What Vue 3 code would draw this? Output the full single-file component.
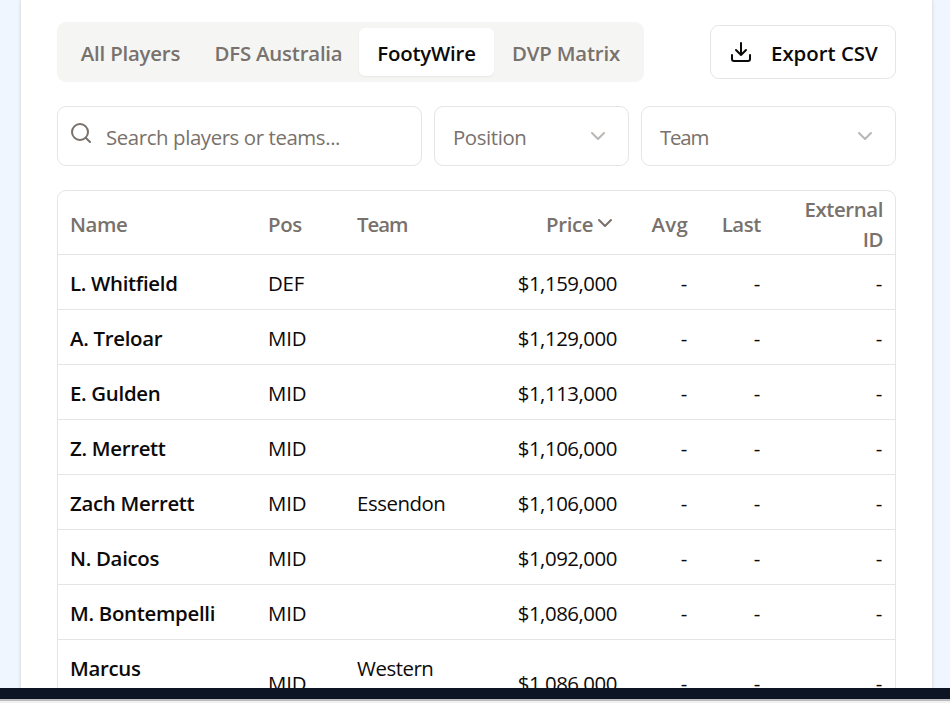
<script setup>
const tabs = ['All Players', 'DFS Australia', 'FootyWire', 'DVP Matrix']
const active = 'FootyWire'
const players = [
  { name: 'L. Whitfield', pos: 'DEF', team: '', price: '$1,159,000' },
  { name: 'A. Treloar', pos: 'MID', team: '', price: '$1,129,000' },
  { name: 'E. Gulden', pos: 'MID', team: '', price: '$1,113,000' },
  { name: 'Z. Merrett', pos: 'MID', team: '', price: '$1,106,000' },
  { name: 'Zach Merrett', pos: 'MID', team: 'Essendon', price: '$1,106,000' },
  { name: 'N. Daicos', pos: 'MID', team: '', price: '$1,092,000' },
  { name: 'M. Bontempelli', pos: 'MID', team: '', price: '$1,086,000' },
  { name: 'Marcus Bontempelli', pos: 'MID', team: 'Western Bulldogs', price: '$1,086,000' },
]
</script>

<template>
  <div class="page">
    <div class="viewport">
      <main class="card">
        <div class="toolbar">
          <div class="tabs">
            <button v-for="t in tabs" :key="t" class="tab" :class="{ active: t === active }"><span>{{ t }}</span></button>
          </div>
          <button class="export">
            <svg width="24" height="24" viewBox="0 0 24 24" class="icon">
              <path d="M21 15v4a2 2 0 0 1-2 2H5a2 2 0 0 1-2-2v-4M7 10l5 5 5-5M12 15V3" />
            </svg>
            <span>Export CSV</span>
          </button>
        </div>

        <div class="filters">
          <div class="field search">
            <svg width="24" height="24" viewBox="0 0 24 24" class="icon">
              <circle cx="11" cy="11" r="8" />
              <path d="m21 21-4.3-4.3" />
            </svg>
            <span>Search players or teams...</span>
          </div>
          <div class="field select position">
            <span>Position</span>
            <svg width="24" height="24" viewBox="0 0 24 24" class="icon"><path d="m6 9 6 6 6-6" /></svg>
          </div>
          <div class="field select team-select">
            <span>Team</span>
            <svg width="24" height="24" viewBox="0 0 24 24" class="icon"><path d="m6 9 6 6 6-6" /></svg>
          </div>
        </div>

        <div class="table-wrap">
          <table>
            <colgroup>
              <col class="c-name" /><col class="c-pos" /><col class="c-team" /><col class="c-price" />
              <col class="c-avg" /><col class="c-last" /><col class="c-ext" />
            </colgroup>
            <thead>
              <tr>
                <th>Name</th>
                <th>Pos</th>
                <th class="team-head">Team</th>
                <th class="num">
                  <div class="sort">
                    <span>Price</span>
                    <svg width="24" height="24" viewBox="0 0 24 24" class="icon"><path d="m6 9 6 6 6-6" /></svg>
                  </div>
                </th>
                <th class="num avg-head">Avg</th>
                <th class="num">Last</th>
                <th class="num">External ID</th>
              </tr>
            </thead>
            <tbody>
              <tr v-for="p in players" :key="p.name">
                <td class="name">{{ p.name }}</td>
                <td class="pos">{{ p.pos }}</td>
                <td>{{ p.team }}</td>
                <td class="num price">{{ p.price }}</td>
                <td class="num dash">-</td>
                <td class="num dash">-</td>
                <td class="num dash">-</td>
              </tr>
            </tbody>
          </table>
        </div>
      </main>
    </div>
    <div class="taskbar"></div>
    <div class="edge"></div>
  </div>
</template>

<style>
body {
  overflow: hidden;
}
</style>

<style scoped>
.page {
  width: 950px;
  height: 703px;
  display: flex;
  flex-direction: column;
  overflow: hidden;
  background: #f1f1f1;
  color: #0c0a09;
  font-family: "Segoe UI", "Open Sans", "Noto Sans", sans-serif;
  font-size: 20.4px;
  line-height: 30px;
}
.page * {
  box-sizing: border-box;
}
.viewport {
  height: 688px;
  flex: none;
  overflow: hidden;
  padding: 0 17px 0 20px;
  background: #eff6ff;
}
.card {
  height: 800px;
  padding: 22px 36px 0;
  background: #fff;
  border: solid #e5e5e5;
  border-width: 0 1px;
  box-shadow: 0 1px 3px rgba(0, 0, 0, 0.1);
}
.toolbar {
  display: flex;
  align-items: center;
  justify-content: space-between;
  height: 60px;
}
button {
  font: inherit;
  color: inherit;
  border: 0;
  background: none;
  white-space: nowrap;
}
.tabs {
  display: flex;
  width: 587px;
  height: 60px;
  padding: 6px;
  border-radius: 9px;
  background: #f5f5f4;
}
.tab {
  height: 48px;
  padding: 1px 0 0;
  flex: 0 0 135px;
  border-radius: 6px;
  font-weight: 570;
  letter-spacing: -0.2px;
  color: #78716c;
}
.tab:nth-child(2) {
  flex-basis: 161px;
}
.tab:nth-child(4) {
  flex-basis: 144px;
}
.tab.active {
  background: #fff;
  color: #0c0a09;
  box-shadow: 0 1px 2px rgba(0, 0, 0, 0.06);
}
.export {
  display: flex;
  align-items: center;
  width: 186px;
  height: 54px;
  padding: 0 0 0 18px;
  gap: 18px;
  border: 1px solid #e5e5e5;
  border-radius: 9px;
  font-weight: 570;
  letter-spacing: 0;
}
.export span {
  padding-top: 1px;
}
.icon {
  flex: none;
  display: block;
  fill: none;
  stroke: currentColor;
  stroke-width: 2;
  stroke-linecap: round;
  stroke-linejoin: round;
}
.filters {
  display: flex;
  gap: 12px;
  margin-top: 24px;
}
.field {
  display: flex;
  align-items: center;
  height: 60px;
  border: 1px solid #e5e5e5;
  border-radius: 9px;
  color: #78716c;
  letter-spacing: -0.4px;
  white-space: nowrap;
}
.field span {
  padding-top: 1px;
}
.search {
  width: 365px;
  padding-left: 11px;
  gap: 13px;
}
.search .icon {
  margin-bottom: 6px;
}
.select {
  justify-content: space-between;
  padding: 0 18px;
}
.select .icon {
  opacity: 0.5;
}
.position {
  width: 195px;
}
.team-select {
  width: 255px;
  letter-spacing: -1.2px;
}
.table-wrap {
  margin-top: 24px;
  border: 1px solid #e5e5e5;
  border-radius: 9px;
}
table {
  width: 837px;
  table-layout: fixed;
  border-collapse: separate;
  border-spacing: 0;
}
.c-name { width: 198px; }
.c-pos { width: 89px; }
.c-team { width: 150px; }
.c-price { width: 134px; }
.c-avg { width: 71px; }
.c-last { width: 73px; }
.c-ext { width: 122px; }
th {
  height: 64px;
  padding: 3px 12px 0;
  border-bottom: 1px solid #e5e5e5;
  color: #78716c;
  font-weight: 570;
  letter-spacing: -0.4px;
  text-align: left;
  vertical-align: middle;
}
.team-head {
  letter-spacing: -1px;
}
.avg-head {
  letter-spacing: 0.3px;
}
td {
  padding: 13px 12px 11px;
  border-bottom: 1px solid #e5e5e5;
  letter-spacing: -0.45px;
  vertical-align: middle;
}
.pos {
  letter-spacing: -0.2px;
}
.name {
  font-weight: 600;
  letter-spacing: -0.3px;
}
.num {
  text-align: right;
}
.dash {
  letter-spacing: 0.6px;
}
.sort {
  display: flex;
  align-items: center;
  justify-content: flex-end;
}
.sort .icon {
  margin-bottom: 3px;
}
.taskbar {
  flex: none;
  height: 11px;
  background: #0d1423;
}
.edge {
  flex: none;
  height: 2px;
  background: #bcbcbe;
}
</style>
